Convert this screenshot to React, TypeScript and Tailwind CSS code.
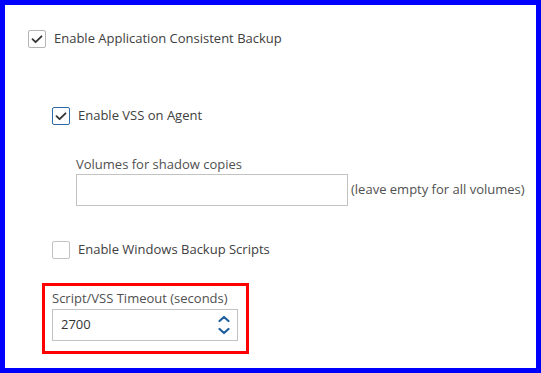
import React from "react";

function Check({ checked, border }: { checked?: boolean; border: string }) {
  return (
    <div className={`w-[18px] h-[18px] rounded-[2px] border bg-white flex items-center justify-center shrink-0 ${border}`}>
      {checked && (
        <svg width="14" height="14" viewBox="0 0 14 14" fill="none">
          <path d="M2.5 7.2 L5.6 10.2 L11.5 4.3" stroke="#333" strokeWidth="1.8" strokeLinecap="round" strokeLinejoin="round" />
        </svg>
      )}
    </div>
  );
}

export default function App() {
  return (
    <div
      className="w-[541px] h-[373px] border-[5px] border-[#0000ff] bg-white box-border text-[13px] text-[#404040] overflow-hidden"
      style={{ fontFamily: "'Open Sans', sans-serif" }}
    >
      <div className="flex flex-col pl-[23px] pt-[25px]">
        <div className="flex items-center gap-[8px] h-[18px]">
          <Check checked border="border-[#b5b5b5]" />
          <span>Enable Application Consistent Backup</span>
        </div>

        <div className="flex items-center gap-[8px] h-[18px] mt-[59px] ml-[24px]">
          <Check checked border="border-[#2c6aa6]" />
          <span>Enable VSS on Agent</span>
        </div>

        <div className="ml-[48px] mt-[30px] flex flex-col">
          <div className="leading-[18px] text-[#505050]">Volumes for shadow copies</div>
          <div className="flex items-center mt-[1px]">
            <div className="w-[272px] h-[32px] border border-[#c3c3c3] bg-white" />
            <span className="ml-[3px] text-[#505050]">(leave empty for all volumes)</span>
          </div>
        </div>

        <div className="flex items-center gap-[8px] h-[18px] mt-[35px] ml-[24px]">
          <Check border="border-[#c3c3c3]" />
          <span>Enable Windows Backup Scripts</span>
        </div>

        <div className="ml-[14px] mt-[24px] w-[207px] h-[71px] border-[3px] border-[#ff0000] box-border pl-[7px] pt-[3px]">
          <div className="leading-[18px] text-[#505050]">Script/VSS Timeout (seconds)</div>
          <div className="mt-[2px] w-[186px] h-[32px] border border-[#c3c3c3] flex items-center justify-between pl-[8px] pr-[7px]">
            <span className="text-[#333]">2700</span>
            <svg width="12" height="20" viewBox="0 0 12 20" fill="none">
              <path d="M1.5 6 L6 2 L10.5 6" stroke="#1f5f9e" strokeWidth="2.2" strokeLinecap="round" strokeLinejoin="round" />
              <path d="M1.5 14 L6 18 L10.5 14" stroke="#1f5f9e" strokeWidth="2.2" strokeLinecap="round" strokeLinejoin="round" />
            </svg>
          </div>
        </div>
      </div>
    </div>
  );
}
